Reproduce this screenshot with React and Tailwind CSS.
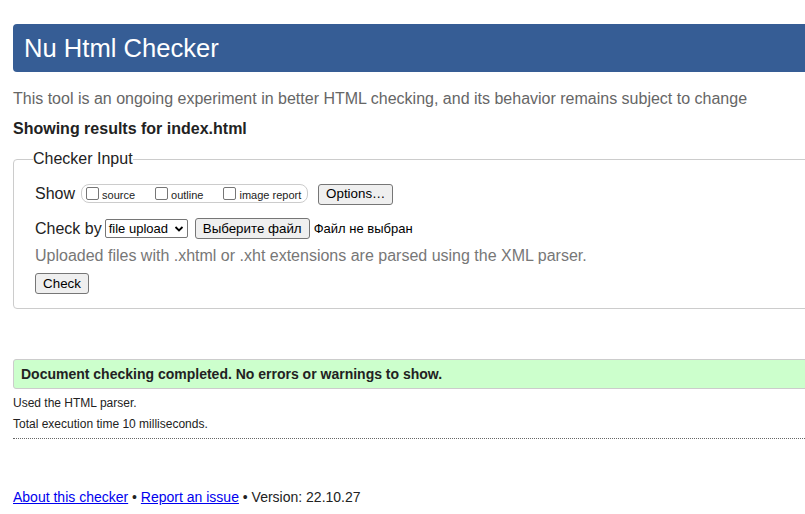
import React from "react";

const Checkbox = ({ label }) => (
  <label className="flex items-center gap-[3px]">
    <span className="w-[13px] h-[13px] border border-[#767676] rounded-[2px] bg-white" />
    <span className="pt-[4px] text-[11px] leading-none text-[#222]">{label}</span>
  </label>
);

const Btn = ({ children, className = "" }) => (
  <span
    className={`inline-flex items-center justify-center h-[21px] border border-[#767676] rounded-[3px] bg-[#efefef] text-[13.33px] text-black ${className}`}
  >
    {children}
  </span>
);

export default function App() {
  return (
    <div className="w-[805px] h-[514px] overflow-hidden bg-white font-['Liberation_Sans',Arial,sans-serif] text-[#222]">
      <div className="w-[840px] px-[13px] pt-[24px]">
        <h1 className="h-[48px] flex items-center pl-[11px] bg-[#365d95] rounded-[4px] text-white text-[25.6px]">
          Nu Html Checker
        </h1>

        <p className="mt-[17px] text-[16px] leading-[20px] text-[#666]">
          This tool is an ongoing experiment in better HTML checking, and its behavior remains subject to change
        </p>
        <p className="mt-[10px] text-[16px] leading-[20px] font-bold">Showing results for index.html</p>

        <fieldset className="mt-[10px] border border-[#ccc] rounded-[4px] px-[21px] pt-[14px] h-[160px]">
          <legend className="text-[16px] leading-[20px] -ml-[2px]">Checker Input</legend>

          <div className="flex items-center h-[21px]">
            <span className="text-[16px] mr-[6px]">Show</span>
            <div className="flex items-center gap-[20px] h-[19px] pl-[4px] pr-[6px] border border-[#ccc] rounded-[8px]">
              <Checkbox label="source" />
              <Checkbox label="outline" />
              <Checkbox label="image report" />
            </div>
            <Btn className="ml-[10px] w-[75px] mt-[1px]">Options…</Btn>
          </div>

          <div className="flex items-center h-[21px] mt-[14px]">
            <span className="text-[16px] mr-[3px]">Check by</span>
            <span className="flex items-center justify-between w-[83px] h-[19px] px-[3px] border border-[#767676] rounded-[2px] text-[13px] text-black">
              file upload
              <svg width="10" height="10" viewBox="0 0 10 10">
                <path d="M1.5 3 L5 6.5 L8.5 3" fill="none" stroke="#000" strokeWidth="1.8" />
              </svg>
            </span>
            <Btn className="ml-[7px] w-[115px]">Выберите файл</Btn>
            <span className="ml-[4px] text-[13px] text-black">Файл не выбран</span>
          </div>

          <p className="mt-[7px] text-[16px] leading-[20px] text-[#777]">
            Uploaded files with .xhtml or .xht extensions are parsed using the XML parser.
          </p>

          <div className="mt-[5px]">
            <Btn className="w-[54px]">Check</Btn>
          </div>
        </fieldset>

        <div className="mt-[50px] h-[30px] flex items-center px-[7px] bg-[#ccffcc] border border-[#ccc] rounded-[3px] text-[14px] font-bold">
          Document checking completed. No errors or warnings to show.
        </div>
        <p className="mt-[6px] text-[12px] leading-[16px]">Used the HTML parser.</p>
        <p className="mt-[5px] text-[12px] leading-[16px]">Total execution time 10 milliseconds.</p>
        <div className="mt-[6px] w-[792px] border-b border-dotted border-[#666]" />

        <p className="mt-[49px] text-[14px] leading-[18px]">
          <a href="#" className="text-[#00e] underline">About this checker</a> •{" "}
          <a href="#" className="text-[#00e] underline">Report an issue</a> • Version: 22.10.27
        </p>
      </div>
    </div>
  );
}
